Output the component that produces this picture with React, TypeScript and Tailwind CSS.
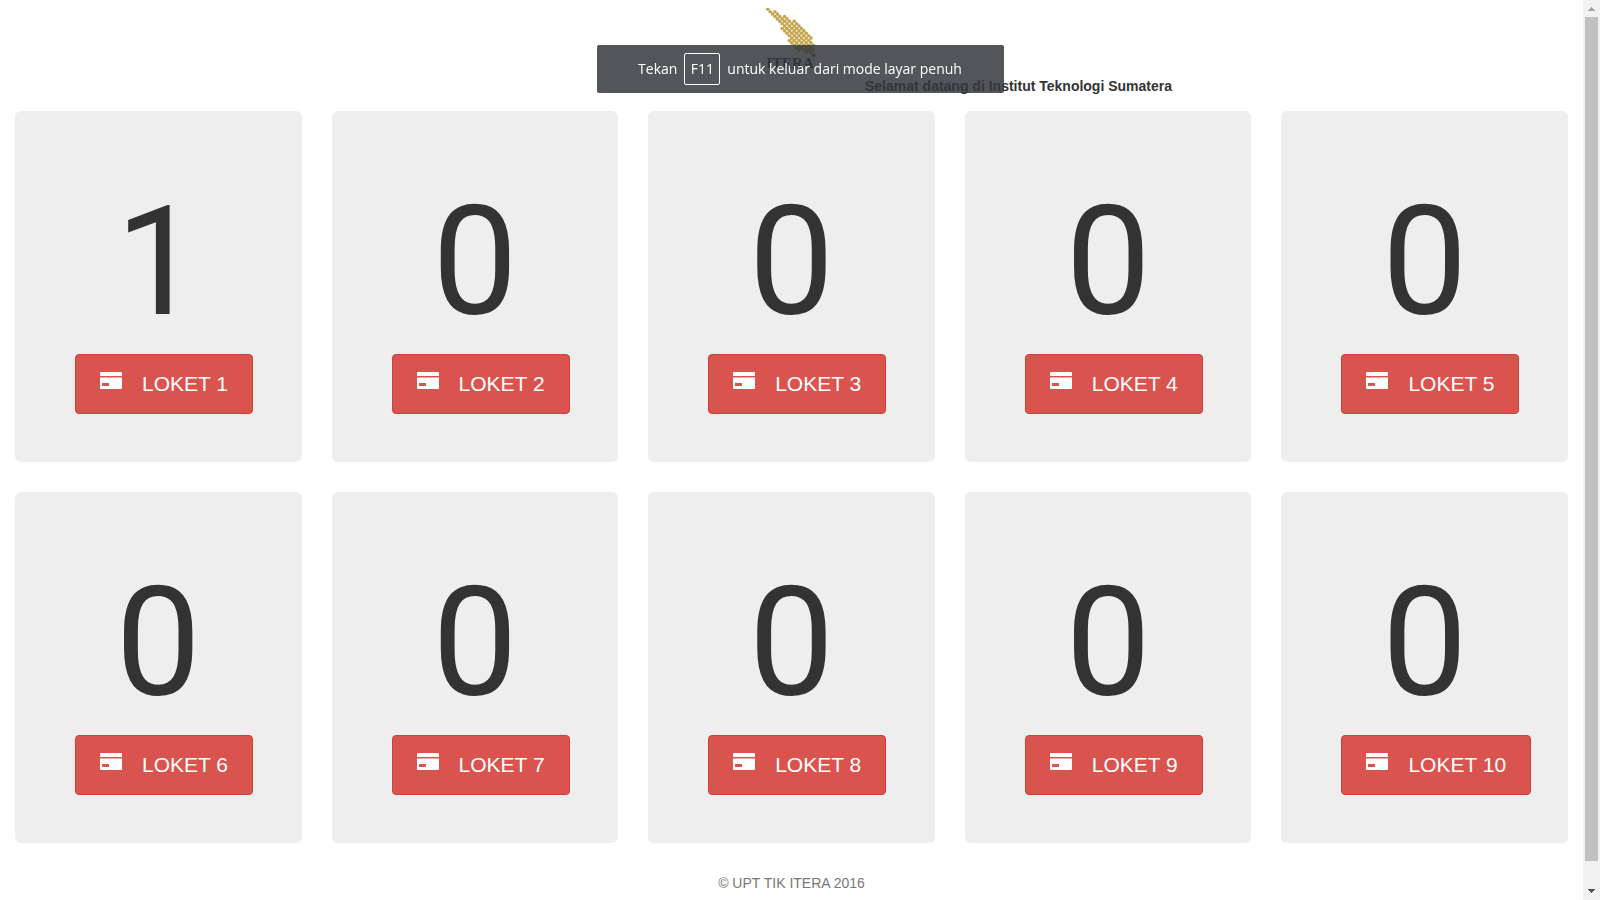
const counters = [1, 0, 0, 0, 0, 0, 0, 0, 0, 0];

function CardIcon() {
  return (
    <svg className="mt-[3px] h-[17px] w-[22px] shrink-0" viewBox="0 0 22 17" fill="currentColor" aria-hidden="true">
      <path d="M1 0h20q1 0 1 1v3H0V1q0-1 1-1z" />
      <path fillRule="evenodd" d="M0 5.5h22V16q0 1-1 1H1q-1 0-1-1zM2 11v3h7v-3z" />
    </svg>
  );
}

// Diagonal strands of the comet: [column minus row, first row, last row]
const strands: [number, number, number][] = [
  [-4, 13, 17],
  [-2, 8, 18],
  [0, 0, 18],
  [2, 1, 17],
  [4, 3, 15],
  [6, 5, 12],
];

const dots = strands.flatMap(([shift, first, last]) =>
  Array.from({ length: last - first + 1 }, (_, i) => [first + i + shift, first + i]),
);

function Logo() {
  return (
    <svg className="h-16 w-[52px]" viewBox="0 0 52 64" role="img" aria-label="ITERA">
      {dots.map(([c, r]) => (
        <circle key={`${c}-${r}`} cx={1.8 + c * 2.4} cy={1.3 + r * 2.4} r="1.8" fill="#c5a54c" />
      ))}
      <circle cx="47.6" cy="47.2" r="1.7" fill="#e0202a" />
      <text x="24" y="60" textAnchor="middle" fontSize="15" fontWeight="700" fill="#222222" fontFamily="Liberation Serif, serif">
        ITERA
      </text>
    </svg>
  );
}

function ScrollTrack() {
  return (
    <div className="fixed inset-y-0 right-0 flex w-[17px] flex-col items-center bg-[#f1f1f1]" aria-hidden="true">
      <svg className="h-[17px] w-[17px] shrink-0" viewBox="0 0 17 17" fill="#a3a3a3" shapeRendering="crispEdges">
        <path d="M5 11V10h1V9h1V8h1V7h1v1h1v1h1v1h1v1z" />
      </svg>
      <div className="mb-[22px] w-[13px] flex-1 bg-[#c1c1c1]" />
      <svg className="h-[17px] w-[17px] shrink-0" viewBox="0 0 17 17" fill="#505050" shapeRendering="crispEdges">
        <path d="M5 6v1h1v1h1v1h1v1h1V9h1V8h1V7h1V6z" />
      </svg>
    </div>
  );
}

export default function App() {
  return (
    <div className="min-h-screen bg-white pr-[17px] font-['Liberation_Sans',Arial,sans-serif] text-sm text-[#333333]">
      <header className="flex flex-col items-center pt-2">
        <Logo />
        <p className="h-[39px] w-full pt-1 pl-[865px] font-bold whitespace-nowrap">Selamat datang di Institut Teknologi Sumatera</p>
      </header>
      <main className="grid grid-cols-5 gap-[30px] px-[15px]">
        {counters.map((n, i) => (
          <section key={i} className="flex h-[351px] flex-col items-start rounded-md bg-[#eeeeee] px-[60px] pt-[60px]">
            <p className="w-full text-center font-[Roboto,sans-serif] text-[152px] leading-[183px]">{n}</p>
            <button className="flex h-[60px] items-start gap-5 rounded border border-[#d43f3a] bg-[#d9534f] px-6 pt-[14px] text-[21px] leading-[30px] whitespace-nowrap text-white">
              <CardIcon />
              LOKET {i + 1}
            </button>
          </section>
        ))}
      </main>
      <footer className="pt-[30px] text-center leading-5 text-[#777777]">© UPT TIK ITERA 2016</footer>
      <div className="fixed inset-x-0 top-[45px] mx-auto flex h-12 w-[407px] items-center justify-center gap-[7px] rounded-xs bg-[#34373c]/85 font-['Open_Sans','Noto_Sans',sans-serif] text-white">
        Tekan
        <kbd className="flex h-8 w-9 items-center justify-center rounded-xs border border-white font-['Open_Sans','Noto_Sans',sans-serif]">F11</kbd>
        untuk keluar dari mode layar penuh
      </div>
      <ScrollTrack />
    </div>
  );
}
